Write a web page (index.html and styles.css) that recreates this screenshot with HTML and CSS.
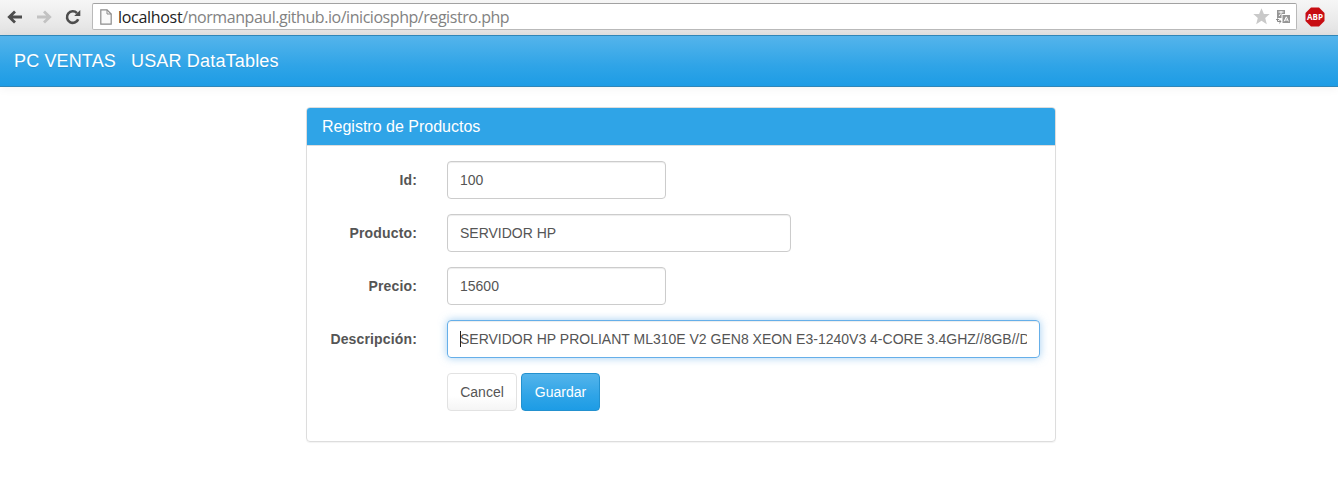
FILE: index.html
```html
<!DOCTYPE html>
<html lang="es">
<head>
<meta charset="utf-8">
<title>Registro de Productos</title>
<link rel="stylesheet" href="styles.css">
</head>
<body>
<div class="toolbar">
  <svg class="arrow" width="16" height="16" viewBox="0 0 16 16"><path d="M15 8H3M8 2.5L2.3 8 8 13.5"/></svg>
  <svg class="arrow arrow-off" width="16" height="16" viewBox="0 0 16 16"><path d="M1 8H13M8 2.5L13.7 8 8 13.5"/></svg>
  <svg class="reload" width="16" height="16" viewBox="0 0 16 16"><path d="M13.2 10.2A5.8 5.8 0 1 1 12 4.1" fill="none" stroke="#4d4d4d" stroke-width="2.6"/><path d="M15.3 1V7H9.2Z" fill="#4d4d4d"/></svg>
  <div class="address">
    <svg class="page-icon" width="12" height="16" viewBox="0 0 12 16"><path d="M.8.8H7L11.2 5V15.2H.8Z" fill="#fafafa" stroke="#8c8c8c" stroke-width="1.2"/><path d="M7 .8V5H11.2" fill="none" stroke="#8c8c8c"/></svg>
    <div class="url"><span class="host">localhost</span>/normanpaul.github.io/iniciosphp/registro.php</div>
    <svg class="star" width="17" height="17" viewBox="0 0 17 17"><path d="M8.5.3L10.9 6H16.7L12.2 9.9 13.8 16.3 8.5 12.7 3.2 16.3 4.8 9.9.3 6H6.1Z" fill="#c9c9c9"/></svg>
    <svg class="translate" width="15" height="15" viewBox="0 0 15 15"><path d="M1 1H9V5H5.5V9H1Z" fill="#969696"/><path d="M2.5 3H7.5M5 2V4.5M3 7L5 4.5" stroke="#fff" fill="none"/><path d="M6.5 6H14V14H6.5Z" fill="#969696"/><path d="M8.2 12.3L10.3 7.8 12.4 12.3M9 11H11.7" stroke="#fff" fill="none"/><path d="M1.5 10V12.5H5M3.2 10.7L5 12.5 3.2 14.3M0 11L1.5 9.7 3 11" stroke="#888" fill="none"/></svg>
  </div>
  <svg class="abp" width="20" height="20" viewBox="0 0 20 20"><path d="M6 .5H14L19.5 6V14L14 19.5H6L.5 14V6Z" fill="#c70d12"/><text x="10" y="13.3" text-anchor="middle" textLength="16" lengthAdjust="spacingAndGlyphs">ABP</text></svg>
</div>
<nav class="navbar"><a class="brand">PC VENTAS</a><a class="brand brand-wide">USAR DataTables</a></nav>
<main class="panel">
  <h1 class="panel-heading">Registro de Productos</h1>
  <form class="form">
    <div class="row"><label class="label">Id:</label><div class="field field-small">100</div></div>
    <div class="row"><label class="label">Producto:</label><div class="field field-medium">SERVIDOR HP</div></div>
    <div class="row"><label class="label">Precio:</label><div class="field field-small">15600</div></div>
    <div class="row"><label class="label">Descripción:</label><div class="field field-large focused"><i class="caret"></i><div class="value">SERVIDOR HP PROLIANT ML310E V2 GEN8 XEON E3-1240V3 4-CORE 3.4GHZ//8GB//D</div></div></div>
    <div class="row actions"><button type="button" class="btn btn-default">Cancel</button><button type="button" class="btn btn-primary">Guardar</button></div>
  </form>
</main>
</body>
</html>
```
FILE: styles.css
```css
* { box-sizing: border-box; }
body { margin: 0; height: 495px; overflow: hidden; background: #fff; color: #555; font: 14px/20px "Liberation Sans", Arial, sans-serif; }
.toolbar { display: flex; align-items: center; height: 35px; padding: 0 13px 2px 7px; background: linear-gradient(#f6f6f6, #e2e2e2); }
.arrow { fill: none; stroke: #4d4d4d; stroke-width: 2.8; margin-right: 13px; }
.arrow-off { stroke: #c2c2c2; }
.address { display: flex; align-items: center; width: 1205px; height: 27px; margin-left: 11px; padding: 0 5px 0 7px; background: #fff; border: 1px solid #b9b9b9; border-top-color: #a2a2a2; border-radius: 2px; }
.reload { flex: none; }
.page-icon { flex: none; }
.url { flex: 1; margin-left: 6px; color: #828282; font: 16px/22px "Open Sans", "Noto Sans", sans-serif; white-space: nowrap; letter-spacing: -0.45px; }
.host { color: #222; letter-spacing: -0.3px; }
.star { margin-right: 6px; }
.abp { margin-left: 8px; }
.abp text { fill: #fff; font: bold 9px "Open Sans", sans-serif; }
.navbar { display: flex; gap: 15px; height: 52px; padding: 14px; border: solid #2f86b8; border-width: 1px 0; background: linear-gradient(#54b4eb, #2fa4e7 60%, #1d9ce5); box-shadow: 0 1px 10px rgba(0, 0, 0, .06); }
.brand { color: #fff; font-size: 18px; line-height: 22px; letter-spacing: .14px; text-shadow: 0 1px 0 rgba(0, 0, 0, .1); white-space: nowrap; }
.brand-wide { letter-spacing: .18px; }
.panel { width: 750px; height: 335px; margin: 20px 0 0 306px; border: 1px solid #ddd; border-radius: 4px; box-shadow: 0 1px 1px rgba(0, 0, 0, .05); }
.panel-heading { margin: 0; height: 38px; padding: 10px 15px; border-bottom: 1px solid #ddd; border-radius: 3px 3px 0 0; background: #2fa4e7; color: #fff; font-size: 16px; font-weight: normal; line-height: 18px; }
.form { display: flex; flex-direction: column; gap: 15px; padding: 15px; }
.row { display: flex; height: 38px; }
.label { width: 95px; margin-right: 30px; padding-top: 9px; text-align: right; font-weight: bold; letter-spacing: .15px; white-space: nowrap; }
.field { position: relative; height: 38px; padding: 8px 12px; border: 1px solid #ccc; border-radius: 4px; box-shadow: inset 0 1px 1px rgba(0, 0, 0, .075); white-space: nowrap; }
.field-small { width: 219px; }
.field-medium { width: 344px; }
.field-large { width: 593px; }
.focused { border-color: #66afe9; box-shadow: inset 0 1px 1px rgba(0, 0, 0, .075), 0 0 8px rgba(102, 175, 233, .6); }
.value { overflow: hidden; }
.caret { position: absolute; left: 12px; top: 10px; width: 1px; height: 16px; background: #222; }
.actions { gap: 4px; padding-left: 125px; }
.btn { height: 38px; padding: 0; border: 1px solid; border-radius: 4px; font: inherit; }
.btn-default { width: 70px; border-color: #e2e2e2; background: linear-gradient(#fff, #fff 60%, #f5f5f5); color: #555; }
.btn-primary { width: 79px; border-color: #2391cf; background: linear-gradient(#54b4eb, #2fa4e7 60%, #1d9ce5); color: #fff; }
```
